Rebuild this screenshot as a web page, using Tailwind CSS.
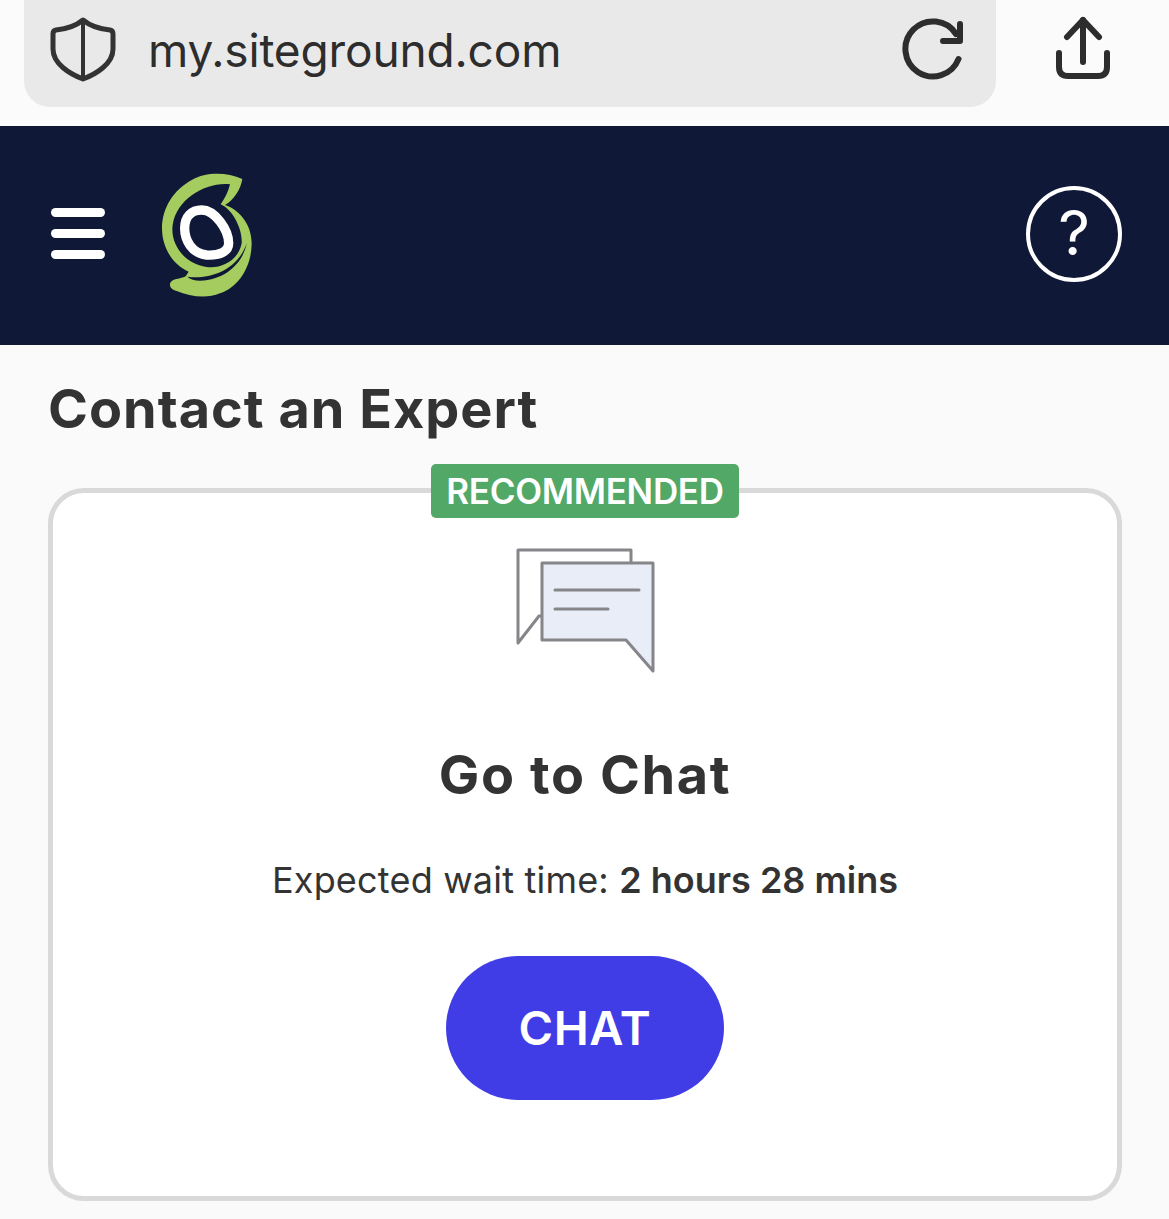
<!DOCTYPE html>
<html lang="en">
<head>
    <meta charset="UTF-8">
    <title>Contact an Expert</title>
    <script src="https://cdn.jsdelivr.net/npm/@tailwindcss/browser@4"></script>
</head>
<body class="bg-[#fafafa] font-['Inter',sans-serif] text-[#333]">
<div class="w-[1169px] h-[1219px] overflow-hidden">
    <!-- browser bar -->
    <div class="flex h-[126px] items-start bg-[#fbfbfb] pl-[24px]">
        <div class="flex h-[107px] w-[972px] items-center rounded-b-[26px] bg-[#e9e9e9] pb-[8px] pl-[26px] pr-[31px]">
            <svg class="mb-[2px] w-[66px] h-[66px] shrink-0" viewBox="0 0 66 66" fill="none" stroke="#333" stroke-width="5" stroke-linejoin="round">
                <path d="M33 4 C27 9 16 13 6 14 C3.5 14.5 3 16 3 18 L3 33 C3 48 20 58 33 63 C46 58 63 48 63 33 L63 18 C63 16 62.5 14.5 60 14 C50 13 39 9 33 4 Z" />
                <path d="M33 4 L33 63" stroke-width="4" />
            </svg>
            <span class="ml-[32px] text-[46px] leading-none text-[#2d2d2d] tracking-[-0.15px]">my.siteground.com</span>
            <svg class="mb-[2px] ml-auto w-[64px] h-[64px] shrink-0" viewBox="0 0 64 64" fill="none" stroke="#2d2d2d" stroke-width="6" stroke-linecap="round" stroke-linejoin="round">
                <path d="M57.5 42 A27.5 27.5 0 1 1 55 17" />
                <path d="M59 7 L59 24 L42 24" />
            </svg>
        </div>
        <svg class="ml-[59px] mt-[16px] w-[56px] h-[64px] shrink-0" viewBox="0 0 56 64" fill="none" stroke="#2d2d2d" stroke-width="6" stroke-linecap="round" stroke-linejoin="round">
            <path d="M28 4 L28 46" />
            <path d="M12 21 L28 4 L44 21" />
            <path d="M4 37 L4 51 C4 57 7 60 13 60 L43 60 C49 60 52 57 52 51 L52 37" />
        </svg>
    </div>

    <!-- site header -->
    <div class="flex h-[219px] items-center bg-[#0f1937] pb-[4px] pl-[51px] pr-[47px]">
        <div class="flex w-[54px] flex-col gap-[12px]">
            <div class="h-[9px] rounded-full bg-white"></div>
            <div class="h-[9px] rounded-full bg-white"></div>
            <div class="h-[9px] rounded-full bg-white"></div>
        </div>
        <svg class="ml-[45px] mt-[2px] w-[115px] h-[140px]" viewBox="0 0 345 420">
            <path fill="#a4cc5e" d="M277 42 C230 22 170 20 125 45 C70 75 36 130 36 190 C36 250 70 300 116 320 L108 332 C100 340 80 340 70 345 C55 352 55 372 80 378 C120 395 170 402 210 385 C270 365 305 300 305 235 C305 180 270 135 225 120 C250 105 272 75 277 42 Z" />
            <path fill="#0f1937" d="M240 58 C170 50 80 100 68 180 C60 240 105 297 170 306 C215 312 266 285 275 235 C278 195 250 135 212 118 C225 100 235 80 240 58 Z" />
            <path fill="#0f1937" d="M112 335 C170 345 262 320 290 235 C280 290 230 345 150 347 C135 347 120 343 112 335 Z" />
            <path fill="none" stroke="#fff" stroke-width="28" d="M155 135 C195 135 236 195 236 235 C236 262 205 272 170 270 C125 265 104 225 104 190 C104 155 125 135 155 135 Z" />
        </svg>
        <div class="ml-auto flex h-[96px] w-[96px] items-center justify-center rounded-full border-[4px] border-white pb-[2px] text-[62px] leading-none font-normal text-white">?</div>
    </div>

    <!-- content -->
    <div class="px-[48px]">
        <h1 class="mt-[33px] text-[54px] leading-[62px] font-bold tracking-[1px] text-[#333]">Contact an Expert</h1>
        <div class="relative mt-[48px] flex h-[713px] w-[1074px] flex-col items-center rounded-[36px] border-[5px] border-[#d9d9d9] bg-white">
            <div class="absolute top-[-29px] left-[378px] flex h-[54px] w-[308px] items-center justify-center rounded-[5px] bg-[#52a866] text-[35px] leading-none font-semibold text-white tracking-[-0.3px]">RECOMMENDED</div>
            <svg class="mt-[54px] w-[140px] h-[126px]" viewBox="0 0 140 126" fill="none" stroke="#85858a" stroke-width="3" stroke-linejoin="round">
                <path d="M113 15 L113 2 L0 2 L0 95 L21 68 L25 68" transform="translate(3 1)" />
                <path fill="#e8edf8" d="M27 16 L138 16 L138 124 L111 93 L27 93 Z" />
                <path d="M40 43 L124 43 M40 62 L93 62" stroke-linecap="round" />
            </svg>
            <h2 class="mt-[71px] text-[54px] leading-[62px] font-bold tracking-[1.6px] text-[#333]">Go to Chat</h2>
            <p class="mt-[52px] text-[36px] leading-[44px] text-[#333] tracking-[0.2px]">Expected wait time: <span class="font-semibold tracking-normal">2 hours 28 mins</span></p>
            <button class="mt-[54px] flex h-[144px] w-[278px] items-center justify-center rounded-[72px] bg-[#403de6] text-[47px] font-semibold tracking-[0.5px] text-white">CHAT</button>
        </div>
    </div>
</div>
</body>
</html>
